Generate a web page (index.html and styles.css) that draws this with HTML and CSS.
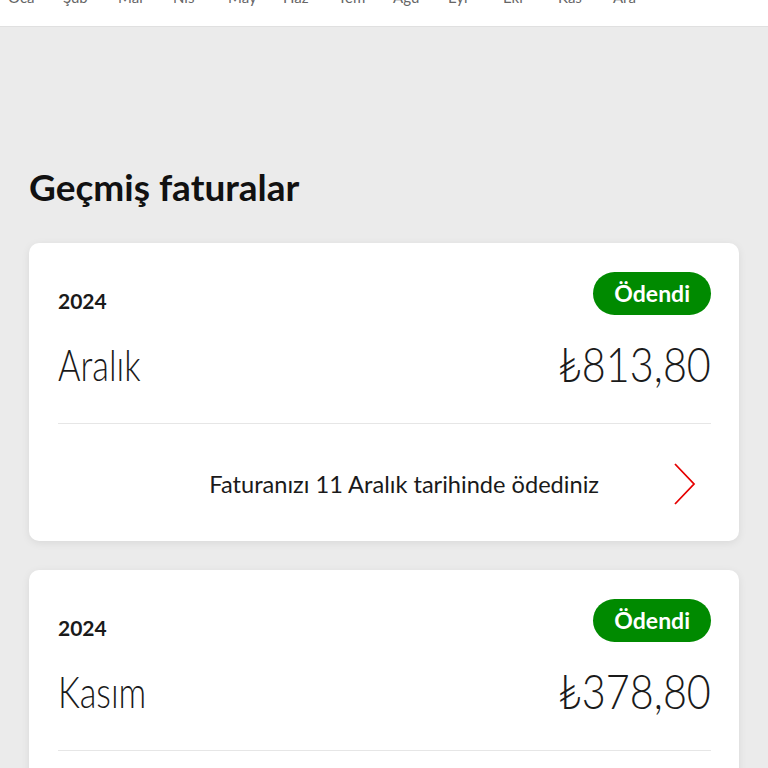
FILE: index.html
```html
<!DOCTYPE html>
<html lang="tr">
<head>
<meta charset="utf-8">
<link rel="stylesheet" href="styles.css">
</head>
<body>
<header class="months">
  <div class="months-row">
    <span>Oca</span><span>Şub</span><span>Mar</span><span>Nis</span><span>May</span><span>Haz</span><span>Tem</span><span>Ağu</span><span>Eyl</span><span>Eki</span><span>Kas</span><span>Ara</span>
  </div>
</header>
<main class="content">
  <h1 class="title">Geçmiş faturalar</h1>
  <section class="card">
    <div class="card-top">
      <span class="year">2024</span>
      <span class="badge">Ödendi</span>
    </div>
    <div class="card-main">
      <span class="month">Aralık</span>
      <span class="amount">₺813,80</span>
    </div>
    <div class="card-foot">
      <span class="note">Faturanızı 11 Aralık tarihinde ödediniz</span>
      <svg class="chev" width="24" height="42" viewBox="0 0 24 42"><path d="M2 1 L21 21 L2 41" fill="none" stroke="#e60000" stroke-width="1.8"/></svg>
    </div>
  </section>
  <section class="card">
    <div class="card-top">
      <span class="year">2024</span>
      <span class="badge">Ödendi</span>
    </div>
    <div class="card-main">
      <span class="month">Kasım</span>
      <span class="amount">₺378,80</span>
    </div>
    <div class="card-foot">
      <span class="note">Faturanızı 11 Kasım tarihinde ödediniz</span>
      <svg class="chev" width="24" height="42" viewBox="0 0 24 42"><path d="M2 1 L21 21 L2 41" fill="none" stroke="#e60000" stroke-width="1.8"/></svg>
    </div>
  </section>
</main>
</body>
</html>
```

FILE: styles.css
```css
html, body {
  margin: 0;
  padding: 0;
  background: #ebebeb;
  font-family: Lato, "Open Sans", "DejaVu Sans", sans-serif;
  color: #1a1a1a;
  overflow: hidden;
}
.months {
  background: #fff;
  height: 26px;
  border-bottom: 1px solid #e0e0e0;
  overflow: hidden;
}
.months-row {
  display: flex;
  padding-left: 8px;
  margin-top: -10px;
  font-size: 15px;
  line-height: 15px;
  color: #666;
}
.months-row span {
  width: 55px;
  flex: none;
}
.content {
  padding: 0 29px 0 29px;
}
.title {
  margin: 0;
  padding-top: 138px;
  font-size: 37px;
  line-height: 44px;
  font-weight: 700;
  color: #111;
  height: 78px;
}
.card {
  background: #fff;
  border-radius: 10px;
  box-shadow: 0 2px 8px rgba(0,0,0,0.08);
  padding: 29px 28px 0 29px;
  margin-bottom: 29px;
  height: 298px;
  box-sizing: border-box;
}
.card-top {
  display: flex;
  justify-content: space-between;
  align-items: center;
  height: 43px;
}
.year {
  font-size: 21px;
  font-weight: 700;
  margin-top: 14px;
}
.badge {
  background: #008a00;
  color: #fff;
  font-weight: 700;
  font-size: 23px;
  height: 43px;
  line-height: 43px;
  padding: 0 21px;
  border-radius: 22px;
}
.card-main {
  display: flex;
  justify-content: space-between;
  align-items: center;
  height: 58px;
  margin-top: 20px;
  border-bottom: 1px solid #e6e6e6;
  padding-bottom: 30px;
}
.month {
  display: inline-block;
  font-size: 43px;
  font-weight: 300;
  transform: scaleX(0.8);
  transform-origin: left center;
}
.amount {
  display: inline-block;
  font-size: 47px;
  font-weight: 300;
  transform: scaleX(0.88);
  transform-origin: right center;
}
.card-foot {
  display: flex;
  align-items: center;
  justify-content: flex-end;
  height: 120px;
  gap: 74px;
  padding-right: 14px;
}
.note {
  font-size: 23.6px;
}
.chev {
  display: block;
}
```
